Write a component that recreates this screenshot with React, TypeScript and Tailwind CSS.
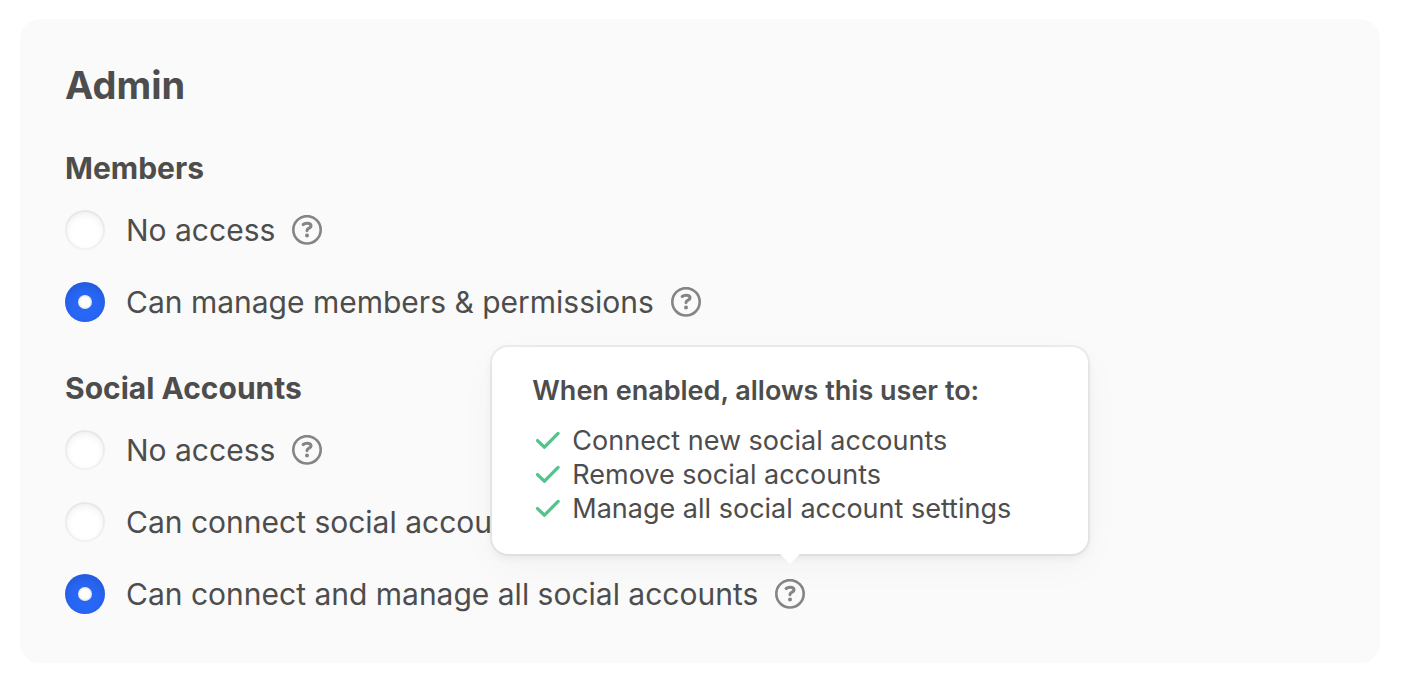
import { useState, type ReactNode } from "react";

type Option = {
  value: string;
  label: string;
  grants?: string[];
};

type Group = {
  id: string;
  title: string;
  options: Option[];
};

const groups: Group[] = [
  {
    id: "members",
    title: "Members",
    options: [
      { value: "none", label: "No access" },
      { value: "manage", label: "Can manage members & permissions" },
    ],
  },
  {
    id: "social",
    title: "Social Accounts",
    options: [
      { value: "none", label: "No access" },
      { value: "connect", label: "Can connect social accounts" },
      {
        value: "manage",
        label: "Can connect and manage all social accounts",
        grants: [
          "Connect new social accounts",
          "Remove social accounts",
          "Manage all social account settings",
        ],
      },
    ],
  },
];

function HelpIcon() {
  return (
    <svg viewBox="0 0 30 30" className="size-[30px]" fill="none" aria-hidden>
      <circle cx="15" cy="14.8" r="13.7" stroke="currentColor" strokeWidth="2.6" />
      <path
        d="M11.2 9.5C12.2 8.6 13.5 8.3 15 8.3c2.4 0 4 .9 4 2.6 0 2.4-4 2.1-4 4.7"
        stroke="currentColor"
        strokeWidth="3.1"
        strokeLinecap="round"
      />
      <circle cx="15" cy="20.5" r="2" fill="currentColor" />
    </svg>
  );
}

function CheckIcon() {
  return (
    <svg viewBox="0 0 30 30" className="size-[30px] shrink-0 text-[#52c48e]" fill="none" aria-hidden>
      <path
        d="M5.5 14.6l7 6.6L26.1 7.4"
        stroke="currentColor"
        strokeWidth="3.3"
        strokeLinecap="round"
        strokeLinejoin="round"
      />
    </svg>
  );
}

function Tooltip({ title, children }: { title: string; children: ReactNode }) {
  return (
    <div
      role="tooltip"
      className="absolute bottom-full left-1/2 z-10 mb-[25px] w-[596px] -translate-x-1/2 rounded-2xl bg-white px-10 pt-[27px] pb-7 text-[27px] leading-[34px] shadow-[0_0_0_2px_rgba(0,0,0,0.05),0_4px_10px_rgba(0,0,0,0.06),0_12px_40px_rgba(0,0,0,0.03)]"
    >
      <p className="font-semibold">{title}</p>
      {children}
      <span
        aria-hidden
        className="absolute top-full left-1/2 size-[14px] -translate-1/2 rotate-45 bg-white"
      />
    </div>
  );
}

function Help({ option }: { option: Option }) {
  return (
    <span className="relative flex text-[#858585]">
      <button type="button" aria-label={`About: ${option.label}`}>
        <HelpIcon />
      </button>
      {option.grants && (
        <div className="text-[#4d4d4d]">
          <Tooltip title="When enabled, allows this user to:">
            <ul className="mt-4">
              {option.grants.map((grant) => (
                <li key={grant} className="flex items-center gap-[10px]">
                  <CheckIcon />
                  {grant}
                </li>
              ))}
            </ul>
          </Tooltip>
        </div>
      )}
    </span>
  );
}

function RadioGroup({ group }: { group: Group }) {
  const [selected, setSelected] = useState("manage");

  return (
    <fieldset>
      <legend className="text-[30px] leading-10 font-bold">{group.title}</legend>
      <div className="mt-[22px] flex flex-col gap-8">
        {group.options.map((option) => {
          const id = `${group.id}-${option.value}`;
          return (
            <div key={id} className="flex items-center">
              <input
                type="radio"
                id={id}
                name={group.id}
                value={option.value}
                checked={selected === option.value}
                onChange={() => setSelected(option.value)}
                className="grid size-10 shrink-0 appearance-none place-items-center rounded-full bg-white shadow-[inset_0_0_0_2px_rgba(0,0,0,0.04),inset_0_3px_8px_rgba(0,0,0,0.08)] checked:bg-[#2866f6] checked:shadow-[inset_0_4px_8px_rgba(0,0,0,0.12)] checked:before:size-[14px] checked:before:rounded-full checked:before:bg-white checked:before:shadow-[inset_0_0_3px_rgba(0,0,0,0.25)] checked:before:content-['']"
              />
              <label htmlFor={id} className="pr-[17px] pl-[21px] text-[30px] leading-10">
                {option.label}
              </label>
              <Help option={option} />
            </div>
          );
        })}
      </div>
    </fieldset>
  );
}

export default function App() {
  return (
    <main className="bg-white py-[19px] pr-[22px] pl-5 font-['Inter',sans-serif] text-[#4d4d4d]">
      <section className="rounded-[20px] bg-[#fafafa] px-[45px] pt-[42px] pb-[49px]">
        <h1 className="text-[38px] leading-12 font-bold">Admin</h1>
        <form className="mt-[39px] flex flex-col gap-[46px]">
          {groups.map((group) => (
            <RadioGroup key={group.id} group={group} />
          ))}
        </form>
      </section>
    </main>
  );
}
